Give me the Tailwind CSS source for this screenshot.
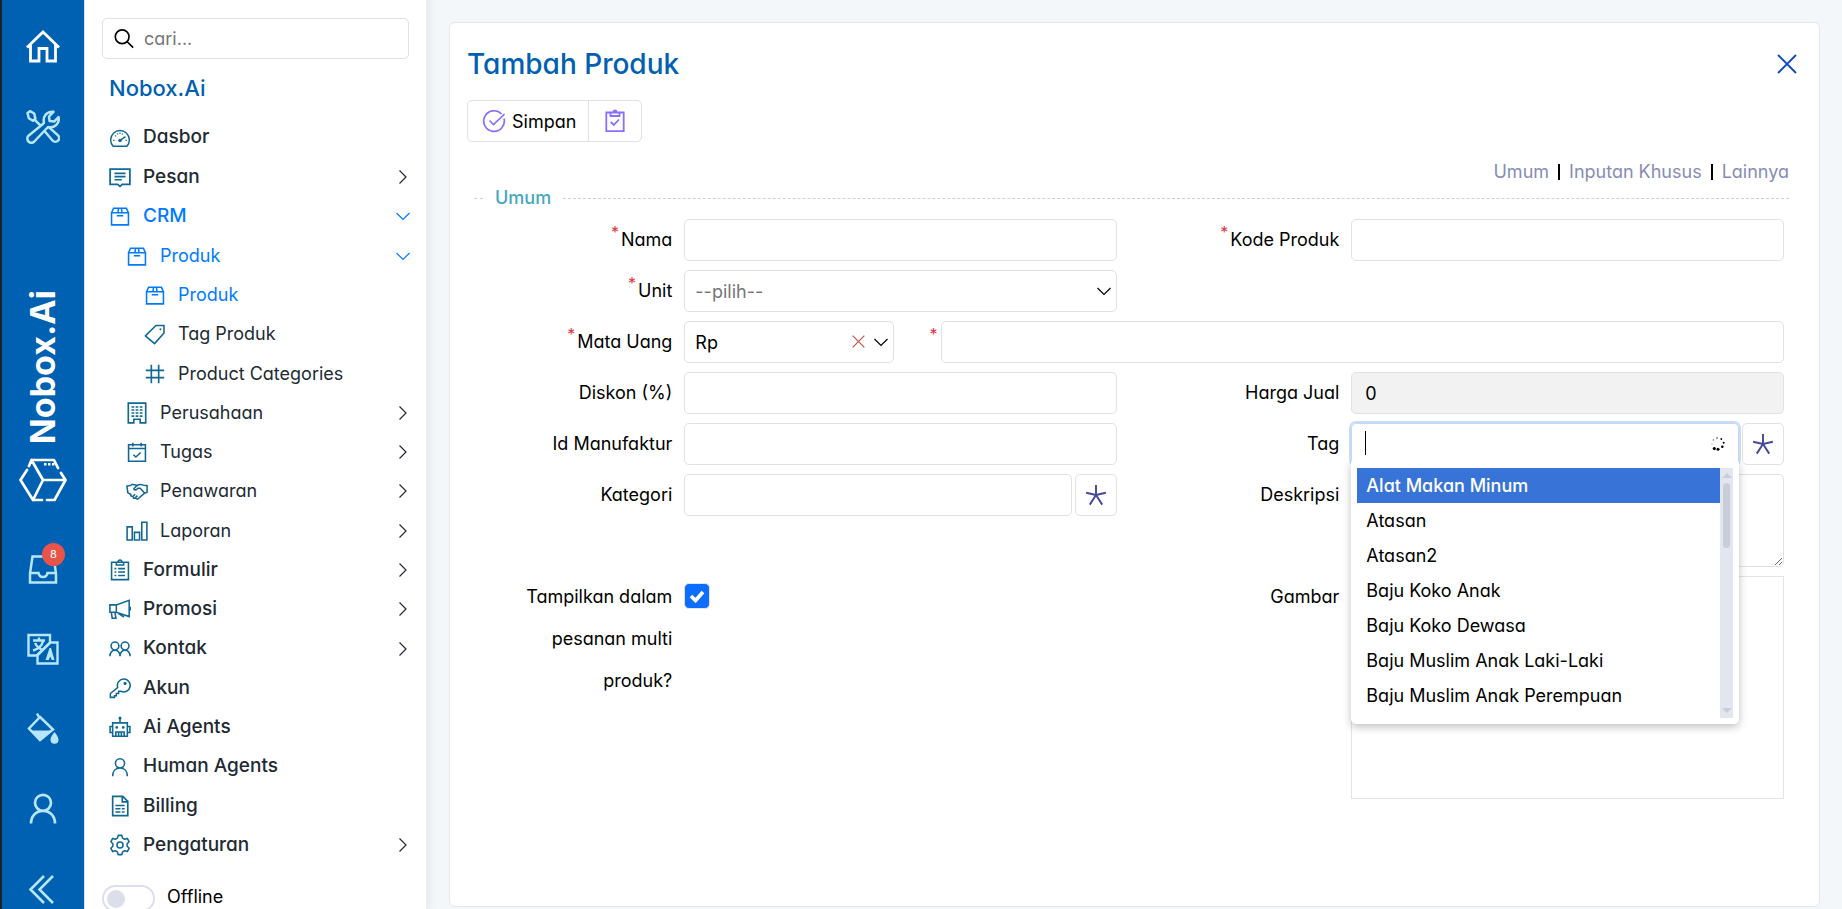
<!DOCTYPE html>
<html lang="id">
<head>
<meta charset="utf-8">
<title>Nobox.Ai - Tambah Produk</title>
<script src="https://cdn.jsdelivr.net/npm/@tailwindcss/browser@4"></script>
</head>
<body class="h-screen overflow-hidden bg-[#f3f7fa] font-['Inter','Liberation_Sans',sans-serif] text-[18px] text-black [font-feature-settings:'cv11']">

<svg class="hidden" aria-hidden="true">
  <symbol id="home" viewBox="0 0 34 34"><path d="M1 17.500 17 2l16 15.500M4.500 15V31h8.500V18.500h8V31h8.500V15" fill="none" stroke="currentColor" stroke-width="2.800"/></symbol>
  <symbol id="tools" viewBox="0 0 34 34"><g fill="none" stroke="currentColor" stroke-width="2.500" stroke-linejoin="round"><path d="M1.500 3 4 1.200l4.200 2.300 1.200 5.200L7 10.800 2.800 8.200z"/><path d="m8.500 9.700 6.500 6.300"/><path d="m16 14.800 2-2C16.500 7 20.500 1 27.500 1.800L23 6.500 23.600 11l4.600.6 4.300-4.600c1.500 6.500-4 11.500-10.500 10L8.300 31.500a4 4 0 0 1-5.800-5.800z"/><path d="m18.500 21 8.200 9.700a3.700 3.700 0 0 0 5.300-5.300L22.800 17"/></g></symbol>
  <symbol id="cube" viewBox="0 0 48 44"><g fill="none" stroke="currentColor" stroke-width="2.700" stroke-linejoin="round" stroke-linecap="round"><path d="M10 8 12.500 2H35l4 8M42 15l4.500 7-11 20H28M23 42H14L1.500 22l6.500-10M12.500 2 24 22h22M24 22 14 42"/></g><path d="M25 5h2.500v2.500H25zm4 0h2.500v2.500H29zm4 0h2.500v2.500H33z" fill="currentColor"/></symbol>
  <symbol id="inbox" viewBox="0 0 34 34"><path d="M6.500 4.500h21l2.500 17v9H4v-9zM4 21h8.500c.5 3 2.500 4 4.500 4s4-1 4.500-4H30" fill="none" stroke="currentColor" stroke-width="2.500"/></symbol>
  <symbol id="translate" viewBox="0 0 34 34"><g fill="none" stroke="currentColor" stroke-width="2.400"><path d="M24 12V3H2.500v20.500H10"/><path d="M24.500 10.500h7V31.500h-20v-8z"/><path d="M24 10.500 10 24M7 8.500h12M13 5.500v3M17 9c-1 5-5 8-10 9.500M9 11c2 4 4 6 8 7"/></g><path d="m19.500 28 4-12h1.500l3.500 12h-2.700l-1.600-3.500-1.500 3.500z" fill="currentColor"/></symbol>
  <symbol id="bucket" viewBox="0 0 34 34"><path d="M11 1.500 13.500 6M14 5 27 17.500 14 28 3 16.500z" fill="none" stroke="currentColor" stroke-width="2.500"/><path d="M5 18.500h21L14 29zM28.500 20c2.500 3.500 4 5.500 4 7.700a4 4 0 0 1-8 0c0-2.200 1.500-4.200 4-7.700" fill="currentColor"/></symbol>
  <symbol id="person" viewBox="0 0 34 34"><path d="M17 18.800a8 8 0 1 0 0-16 8 8 0 0 0 0 16zM5 31.500c0-7.500 5-12.700 12-12.700s12 5.200 12 12.700" fill="none" stroke="currentColor" stroke-width="2.700"/></symbol>
  <symbol id="collapse" viewBox="0 0 34 34"><path d="M18 4 4.500 17.500 18 31M27 4 13.500 17.500 27 31" fill="none" stroke="currentColor" stroke-width="2.600"/></symbol>

  <symbol id="search" viewBox="0 0 24 24"><g fill="none" stroke="currentColor" stroke-width="1.800"><circle cx="10" cy="9.500" r="7.500"/><path d="m15.500 15 6.500 6.500"/></g></symbol>
  <symbol id="dash" viewBox="0 0 24 24"><g fill="none" stroke="currentColor" stroke-width="1.600"><path d="M4.500 21A10.200 10.200 0 1 1 19.500 21z"/><path d="m12 14.500 6-4"/><path d="M4.500 14.500H6M12 6v1.500M18 14.500h1.500M6.500 9.200l1 1M9 7l.6 1.200M15 7l-.6 1.200" stroke-width="1.300"/></g><circle cx="12" cy="14.800" r="1.900" fill="currentColor"/></symbol>
  <symbol id="chat" viewBox="0 0 24 24"><path d="M1.200 3.500h21.600v16.500H14.500L12 22.300 9.500 20H1.200zM6 8h12M6 11.500h12M6 15h8" fill="none" stroke="currentColor" stroke-width="1.900"/></symbol>
  <symbol id="box" viewBox="0 0 24 24"><path d="M2.800 8.500h18.400v13.200H2.800zM2.800 8.500 5 3.500h14l2.200 5M8.500 11.800h7M9.800 8.200l.6-4.500M14.200 8.200l-.6-4.500" fill="none" stroke="currentColor" stroke-width="1.700"/></symbol>
  <symbol id="tag" viewBox="0 0 24 24"><path d="M13 2.800h8.800V11L11.500 22.500 1.500 14z" fill="none" stroke="currentColor" stroke-width="1.700" stroke-linejoin="round"/><circle cx="17.900" cy="6.800" r="1.100" fill="currentColor"/></symbol>
  <symbol id="hash" viewBox="0 0 24 24"><path d="M8 2v20M16 2v20M2 8h20M2 16h20" fill="none" stroke="currentColor" stroke-width="1.800"/></symbol>
  <symbol id="building" viewBox="0 0 24 24"><path d="M2.500 1.200h19v21.600h-6v-4h-7v4h-6z" fill="none" stroke="currentColor" stroke-width="1.800"/><path d="M6 5.500h12M6 8.800h12M6 12.100h12M6 15.400h12" fill="none" stroke="currentColor" stroke-width="1.700" stroke-dasharray="3 1.500"/></symbol>
  <symbol id="calendar" viewBox="0 0 24 24"><path d="M2.800 4h18.400v18H2.800zM2.800 8.200h18.400M7.500 2v4M16.500 2v4m-8.500 9 2.800 2.500 5.200-5" fill="none" stroke="currentColor" stroke-width="1.700"/></symbol>
  <symbol id="shake" viewBox="0 0 24 24"><path d="M1 6.500c3-.5 4 .3 5.500-1.500C9 4.500 10 5.500 12 6c1.500-1 4-1.500 6-.7 2 .9 3 .7 5 .7v7.500l-3 1-7.500 6.500-2-1.500-2 .5-1-2-2-.5-.5-2-3-1.500zM12 6 8.500 9.500c.5 2 3 1.500 4.500-.5h2.500l4.700 5.200M8 17.500l2-2m.5 3.500 2-2" fill="none" stroke="currentColor" stroke-width="1.700" stroke-linejoin="round"/></symbol>
  <symbol id="bars" viewBox="0 0 24 24"><path d="M1.200 7.500h5.600v14.300H1.200zm8 6h5.600v8.300H9.200zm8-11h5.600v19.300h-5.600z" fill="none" stroke="currentColor" stroke-width="1.700"/></symbol>
  <symbol id="form" viewBox="0 0 24 24"><path d="M2.800 3.500h18.400v19H2.800zM8 3.500V6.500h8V3.500M10 3a2 2 0 0 1 4 0M10 10.500h7.500M10 14.200h7.500M10 18h7.500M6 10.500H8M6 14.200H8M6 18H8" fill="none" stroke="currentColor" stroke-width="1.700"/></symbol>
  <symbol id="horn" viewBox="0 0 24 24"><path d="M1 7.500h7L22 2.500v17.800L8 15.500H1zM8 7.500v8M2.500 15.500l1 6.500h4l-1-6.500M10 16.800l6.500 4M23.300 9.500v4" fill="none" stroke="currentColor" stroke-width="1.700"/></symbol>
  <symbol id="people" viewBox="0 0 24 24"><path d="M6.500 13a4.300 4.300 0 1 0 0-8.600 4.300 4.300 0 0 0 0 8.600zm11 0a4.300 4.300 0 1 0 0-8.600 4.300 4.300 0 0 0 0 8.600zM1 20c0-4 2.500-6.800 5.500-6.800s5.500 2.800 5.500 6.800c0-4 2.500-6.800 5.500-6.800s5.500 2.800 5.500 6.800" fill="none" stroke="currentColor" stroke-width="1.700"/></symbol>
  <symbol id="key" viewBox="0 0 24 24"><path d="M9.500 11.500a7 7 0 1 1 3.500 4H10.500V18H8v2.500H6v1.700H1.500v-4.200z" fill="none" stroke="currentColor" stroke-width="1.700"/><circle cx="17.500" cy="7" r="1.700" fill="currentColor"/></symbol>
  <symbol id="robot" viewBox="0 0 24 24"><path d="M4 7.500h16V22H4zM4 11.500H1.200v6.500H4m16-6.500h2.800v6.500H20M12 7.500V3M7.500 21.500v-4h9v4M10.500 17.500v4m3-4v4" fill="none" stroke="currentColor" stroke-width="1.700"/><circle cx="12" cy="2.200" r="1.700" fill="currentColor"/><circle cx="8.500" cy="12.500" r="1.500" fill="currentColor"/><circle cx="15.500" cy="12.500" r="1.500" fill="currentColor"/></symbol>
  <symbol id="user" viewBox="0 0 24 24"><path d="M12 13a5 5 0 1 0 0-10 5 5 0 0 0 0 10zM4 22c0-5.500 3.200-9 8-9s8 3.500 8 9" fill="none" stroke="currentColor" stroke-width="1.700"/></symbol>
  <symbol id="bill" viewBox="0 0 24 24"><path d="M4 1.500h11l5.500 5.500v15.500H4zM14.500 1.500v6h6M7 11.500h10M7 15h5.500m1.500 0h3M7 18.500h5.500m1.500 0h3" fill="none" stroke="currentColor" stroke-width="1.800"/></symbol>
  <symbol id="gear" viewBox="0 0 24 24"><path d="M10 1.500h4l.8 3 2.200 1.200 3-.9 2 3.700-2.200 2.100v2.800l2.200 2.100-2 3.700-3-.9-2.200 1.200-.8 3h-4l-.8-3L7 18.300l-3 .9-2-3.700 2.200-2.100v-2.800L2 8.500l2-3.700 3 .9 2.200-1.200z" fill="none" stroke="currentColor" stroke-width="1.700" stroke-linejoin="round"/><circle cx="12" cy="12" r="3.300" fill="none" stroke="currentColor" stroke-width="1.700"/></symbol>
  <symbol id="right" viewBox="0 0 16 16"><path d="m4.500 1.500 6.500 6.500-6.500 6.500" fill="none" stroke="currentColor" stroke-width="1.200"/></symbol>
  <symbol id="down" viewBox="0 0 16 16"><path d="m1.500 5 6.500 6.500L14.500 5" fill="none" stroke="currentColor" stroke-width="1.200"/></symbol>
  <symbol id="cross" viewBox="0 0 20 20"><path d="m1 1 18 18M19 1 1 19" fill="none" stroke="currentColor" stroke-width="1.800"/></symbol>
  <symbol id="okcircle" viewBox="0 0 24 24"><path d="M22 9.500A10.300 10.300 0 1 1 19.500 5M7.500 11.500l4 4L22.500 5" fill="none" stroke="currentColor" stroke-width="1.700"/></symbol>
  <symbol id="okclip" viewBox="0 0 24 24"><path d="M3.300 3.500h17.400v18.700H3.300zM7.500 3.500v3.500h9V3.500M10.500 3a1.500 1.500 0 0 1 3 0M7.800 13l3 3L16 10.500" fill="none" stroke="currentColor" stroke-width="1.800"/></symbol>
  <symbol id="star" viewBox="0 0 24 24"><path d="M12 1.200V12M12 12 1.200 9.500M12 12l10.800-2.500M12 12l-6.800 10.500M12 12l6.800 10.500" fill="none" stroke="currentColor" stroke-width="2.100"/></symbol>
</svg>

<div class="flex h-full">
  <!-- Icon rail -->
  <div class="z-10 flex w-[84px] shrink-0 flex-col items-center overflow-hidden border-l-2 border-[#1c2427] bg-[#0060b1] pt-[30px] pb-[3px] text-[#b5e6fc]">
    <a href="#" aria-label="Beranda" class="mb-[46px] text-white"><svg class="size-[34px]"><use href="#home"/></svg></a>
    <a href="#" aria-label="Alat"><svg class="size-[34px]"><use href="#tools"/></svg></a>
    <div class="mt-auto mb-[50px] flex flex-col items-center gap-[14px] text-white">
      <span class="rotate-180 text-[34px] leading-[38px] font-bold [writing-mode:vertical-rl]">Nobox.Ai</span>
      <svg class="h-[44px] w-[48px]"><use href="#cube"/></svg>
    </div>
    <div class="flex flex-col gap-[46px]">
      <a href="#" aria-label="Kotak masuk" class="relative"><svg class="size-[34px]"><use href="#inbox"/></svg><span class="absolute -top-[9px] left-4 flex size-[23px] items-center justify-center rounded-full bg-[#e8544a] text-[11px] text-white">8</span></a>
      <a href="#" aria-label="Bahasa"><svg class="size-[34px]"><use href="#translate"/></svg></a>
      <a href="#" aria-label="Tema"><svg class="size-[34px]"><use href="#bucket"/></svg></a>
      <a href="#" aria-label="Profil"><svg class="size-[34px]"><use href="#person"/></svg></a>
      <button aria-label="Ciutkan"><svg class="size-[34px]"><use href="#collapse"/></svg></button>
    </div>
  </div>

  <!-- Sidebar -->
  <aside class="flex w-[342px] shrink-0 flex-col border-l border-[#e0e4e8] bg-white pt-[18px] shadow-[0_0_8px_4px_#e6eaf0]">
    <label class="mx-[17px] flex h-[41px] items-center gap-[9px] rounded-[5px] border border-[#e1e1e1] px-[10px]">
      <svg class="size-[22px] shrink-0"><use href="#search"/></svg>
      <input type="search" aria-label="Cari" placeholder="cari..." class="w-full outline-none placeholder:text-[#757575]">
    </label>
    <h2 class="flex h-[59px] items-center pl-6 text-[22px] font-medium text-[#0060b1]">Nobox.Ai</h2>
    <nav class="flex min-h-0 flex-1 flex-col pr-[15px] pl-6 text-[#212a33] [&>a]:flex [&>a]:flex-1 [&>a]:items-center">
      <a href="#" class="gap-3 text-[19px] font-medium"><svg class="size-[22px] text-[#106893]"><use href="#dash"/></svg><span class="flex-1">Dasbor</span></a>
      <a href="#" class="gap-3 text-[19px] font-medium"><svg class="size-[22px] text-[#106893]"><use href="#chat"/></svg><span class="flex-1">Pesan</span><svg class="size-4"><use href="#right"/></svg></a>
      <a href="#" class="gap-3 text-[19px] font-medium text-[#007bff]"><svg class="size-[22px]"><use href="#box"/></svg><span class="flex-1">CRM</span><svg class="size-4"><use href="#down"/></svg></a>
      <a href="#" class="gap-3 pl-[17px] text-lg text-[#007bff]"><svg class="size-[22px]"><use href="#box"/></svg><span class="flex-1">Produk</span><svg class="size-4"><use href="#down"/></svg></a>
      <a href="#" class="gap-3 pl-[35px] text-lg text-[#007bff]"><svg class="size-[22px]"><use href="#box"/></svg><span class="flex-1">Produk</span></a>
      <a href="#" class="gap-3 pl-[35px] text-lg"><svg class="size-[22px] text-[#106893]"><use href="#tag"/></svg><span class="flex-1">Tag Produk</span></a>
      <a href="#" class="gap-3 pl-[35px] text-lg"><svg class="size-[22px] text-[#106893]"><use href="#hash"/></svg><span class="flex-1">Product Categories</span></a>
      <a href="#" class="gap-3 pl-[17px] text-lg"><svg class="size-[22px] text-[#106893]"><use href="#building"/></svg><span class="flex-1">Perusahaan</span><svg class="size-4"><use href="#right"/></svg></a>
      <a href="#" class="gap-3 pl-[17px] text-lg"><svg class="size-[22px] text-[#106893]"><use href="#calendar"/></svg><span class="flex-1">Tugas</span><svg class="size-4"><use href="#right"/></svg></a>
      <a href="#" class="gap-3 pl-[17px] text-lg"><svg class="size-[22px] text-[#106893]"><use href="#shake"/></svg><span class="flex-1">Penawaran</span><svg class="size-4"><use href="#right"/></svg></a>
      <a href="#" class="gap-3 pl-[17px] text-lg"><svg class="size-[22px] text-[#106893]"><use href="#bars"/></svg><span class="flex-1">Laporan</span><svg class="size-4"><use href="#right"/></svg></a>
      <a href="#" class="gap-3 text-[19px] font-medium"><svg class="size-[22px] text-[#106893]"><use href="#form"/></svg><span class="flex-1">Formulir</span><svg class="size-4"><use href="#right"/></svg></a>
      <a href="#" class="gap-3 text-[19px] font-medium"><svg class="size-[22px] text-[#106893]"><use href="#horn"/></svg><span class="flex-1">Promosi</span><svg class="size-4"><use href="#right"/></svg></a>
      <a href="#" class="gap-3 text-[19px] font-medium"><svg class="size-[22px] text-[#106893]"><use href="#people"/></svg><span class="flex-1">Kontak</span><svg class="size-4"><use href="#right"/></svg></a>
      <a href="#" class="gap-3 text-[19px] font-medium"><svg class="size-[22px] text-[#106893]"><use href="#key"/></svg><span class="flex-1">Akun</span></a>
      <a href="#" class="gap-3 text-[19px] font-medium"><svg class="size-[22px] text-[#106893]"><use href="#robot"/></svg><span class="flex-1">Ai Agents</span></a>
      <a href="#" class="gap-3 text-[19px] font-medium"><svg class="size-[22px] text-[#106893]"><use href="#user"/></svg><span class="flex-1">Human Agents</span></a>
      <a href="#" class="gap-3 text-[19px] font-medium"><svg class="size-[22px] text-[#106893]"><use href="#bill"/></svg><span class="flex-1">Billing</span></a>
      <a href="#" class="gap-3 text-[19px] font-medium"><svg class="size-[22px] text-[#106893]"><use href="#gear"/></svg><span class="flex-1">Pengaturan</span><svg class="size-4"><use href="#right"/></svg></a>
    </nav>
    <label class="flex h-11 shrink-0 items-start gap-3 overflow-hidden pt-5 pl-[17px]">
      <input type="checkbox" role="switch" class="h-[27px] w-[53px] shrink-0 appearance-none rounded-full border-2 border-[#dcdeeb] before:mt-[3px] before:ml-[3px] before:block before:size-[18px] before:rounded-full before:bg-[#dcdeeb]">
      <span class="leading-6">Offline</span>
    </label>
  </aside>

  <!-- Product form -->
  <main class="min-w-0 flex-1 pt-[22px] pr-[22px] pb-[2px] pl-[23px]">
    <section class="h-full rounded-md border border-[#e4e8eb] bg-white">
      <header class="flex items-center justify-between pt-[23px] pr-[22px] pl-[17px]">
        <h1 class="text-[28px] leading-9 font-medium text-[#0060b1]">Tambah Produk</h1>
        <button aria-label="Tutup" class="text-[#0a46c8]"><svg class="size-5"><use href="#cross"/></svg></button>
      </header>
      <div class="mt-[18px] ml-[17px] flex h-[42px] w-fit rounded-[5px] border border-[#e1e1e1]">
        <button class="flex items-center gap-[6px] border-r border-[#e1e1e1] pr-3 pl-[14px]"><svg class="size-6 text-[#8670ff]"><use href="#okcircle"/></svg>Simpan</button>
        <button aria-label="Simpan dan tutup" class="px-[14px]"><svg class="size-6 text-[#8670ff]"><use href="#okclip"/></svg></button>
      </div>
      <div class="mt-[18px] flex items-center justify-end gap-[9px] pr-[30px] leading-6 text-[#868db5]">
        <a href="#umum">Umum</a><span class="h-4 w-[2px] bg-black"></span><a href="#khusus">Inputan Khusus</a><span class="h-4 w-[2px] bg-black"></span><a href="#lainnya">Lainnya</a>
      </div>
      <div id="umum" class="mt-[2px] flex items-center gap-3 pr-[30px] pl-6">
        <span class="w-[9px] border-t border-dashed border-[#ccd1d1]"></span>
        <h2 class="leading-6 font-medium text-[#45a8bf]">Umum</h2>
        <span class="flex-1 border-t border-dashed border-[#ccd1d1]"></span>
      </div>

      <form class="mt-[9px] grid grid-cols-2 gap-y-[9px] pr-[35px]">
        <div class="flex gap-3">
          <label for="nama" class="w-1/3 text-right leading-[42px]"><sup class="mr-[2px] text-base leading-none text-[#dc3545]">*</sup>Nama</label>
          <input id="nama" class="h-[42px] min-w-0 flex-1 rounded-[5px] border border-[#e1e1e1] px-3">
        </div>
        <div class="flex gap-3">
          <label for="kode" class="w-1/3 text-right leading-[42px]"><sup class="mr-[2px] text-base leading-none text-[#dc3545]">*</sup>Kode Produk</label>
          <input id="kode" class="h-[42px] min-w-0 flex-1 rounded-[5px] border border-[#e1e1e1] px-3">
        </div>

        <div class="flex gap-3">
          <label for="unit" class="w-1/3 text-right leading-[42px]"><sup class="mr-[2px] text-base leading-none text-[#dc3545]">*</sup>Unit</label>
          <div class="relative flex-1">
            <select id="unit" class="h-[42px] w-full appearance-none rounded-[5px] border border-[#e1e1e1] px-[10px] text-[#757575]"><option>--pilih--</option></select>
            <svg class="pointer-events-none absolute top-[13px] right-[5px] size-4"><use href="#down"/></svg>
          </div>
        </div>

        <div class="col-span-2 flex">
          <label for="uang" class="mr-3 w-1/6 text-right leading-[42px]"><sup class="mr-[2px] text-base leading-none text-[#dc3545]">*</sup>Mata Uang</label>
          <div class="relative flex-1">
            <select id="uang" class="h-[42px] w-full appearance-none rounded-[5px] border border-[#e1e1e1] px-[10px]"><option>Rp</option></select>
            <button type="button" aria-label="Hapus pilihan" class="absolute top-[14px] right-[29px] text-[#c0504d]"><svg class="size-[13px]"><use href="#cross"/></svg></button>
            <svg class="pointer-events-none absolute top-[13px] right-[5px] size-4"><use href="#down"/></svg>
          </div>
          <label for="harga" class="w-[47px] pr-[2px] text-right leading-[42px]"><sup class="mr-[2px] text-base leading-none text-[#dc3545]">*</sup></label>
          <input id="harga" aria-label="Harga" class="h-[42px] min-w-0 flex-[4] rounded-[5px] border border-[#e1e1e1]">
        </div>

        <div class="flex gap-3">
          <label for="diskon" class="w-1/3 text-right leading-[42px]">Diskon (%)</label>
          <input id="diskon" class="h-[42px] min-w-0 flex-1 rounded-[5px] border border-[#e1e1e1] px-3">
        </div>
        <div class="flex gap-3">
          <label for="jual" class="w-1/3 text-right leading-[42px]">Harga Jual</label>
          <input id="jual" value="0" readonly class="h-[42px] min-w-0 flex-1 rounded-[5px] border border-[#e1e1e1] bg-[#f2f2f2] px-[13px]">
        </div>

        <div class="flex gap-3">
          <label for="manufaktur" class="w-1/3 text-right leading-[42px]">Id Manufaktur</label>
          <input id="manufaktur" class="h-[42px] min-w-0 flex-1 rounded-[5px] border border-[#e1e1e1] px-3">
        </div>
        <div class="flex gap-3">
          <label for="tag-input" class="w-1/3 text-right leading-[42px]">Tag</label>
          <div class="flex flex-1 gap-[3px]">
            <div class="relative flex-1">
              <input id="tag-input" class="h-[42px] w-full rounded-[5px] border border-[#c3d8f5] px-3 ring-2 ring-[#c9dcf7]">
              <span class="absolute top-2 left-[14px] h-6 w-px bg-black"></span>
              <svg class="absolute top-[14px] right-[14px] size-[14px]" viewBox="0 0 14 14"><circle cx="7" cy="12.300" r="1.500"/><circle cx="3.300" cy="11.600" r="1.600"/><circle cx="11.300" cy="9.700" r="1.300"/><circle cx="12.700" cy="5.800" r="1"/><circle cx="10.300" cy="2" r=".9"/><circle cx="6" cy="1" r=".8" opacity=".8"/><circle cx="2.300" cy="3" r=".7" opacity=".6"/><circle cx="1" cy="7" r=".6" opacity=".5"/></svg>
              <div class="absolute top-[39px] right-0 left-0 z-10 flex rounded-b-[5px] bg-white p-[6px] shadow-[0_3px_8px_rgba(0,0,0,0.25)] [clip-path:inset(0_-12px_-16px_-12px)]">
                <ul role="listbox" aria-label="Tag" class="h-[250px] flex-1 overflow-hidden leading-[35px] [&>li]:pl-[9px]">
                  <li role="option" aria-selected="true" class="bg-[#3874d8] font-medium text-white">Alat Makan Minum</li>
                  <li role="option">Atasan</li>
                  <li role="option">Atasan2</li>
                  <li role="option">Baju Koko Anak</li>
                  <li role="option">Baju Koko Dewasa</li>
                  <li role="option">Baju Muslim Anak Laki-Laki</li>
                  <li role="option">Baju Muslim Anak Perempuan</li>
                </ul>
                <div class="flex w-[13px] flex-col items-center bg-[#e2e6ee] py-[5px]">
                  <span class="border-x-[5px] border-b-[5px] border-x-transparent border-b-[#c9cdd9]"></span>
                  <span class="mt-[5px] h-[65px] w-[7px] rounded-full bg-[#c9cdd9]"></span>
                  <span class="mt-auto border-x-[5px] border-t-[5px] border-x-transparent border-t-[#c9cdd9]"></span>
                </div>
              </div>
            </div>
            <button type="button" aria-label="Tambah tag" class="flex size-[42px] items-center justify-center rounded-[5px] border border-[#e1e1e1] text-[#464a92]"><svg class="size-[22px]"><use href="#star"/></svg></button>
          </div>
        </div>

        <div class="flex gap-3">
          <label for="kategori" class="w-1/3 text-right leading-[42px]">Kategori</label>
          <div class="flex flex-1 gap-[3px]">
            <input id="kategori" class="h-[42px] min-w-0 flex-1 rounded-[5px] border border-[#e1e1e1] px-3">
            <button type="button" aria-label="Tambah kategori" class="flex size-[42px] items-center justify-center rounded-[5px] border border-[#e1e1e1] text-[#464a92]"><svg class="size-[22px]"><use href="#star"/></svg></button>
          </div>
        </div>
        <div class="flex gap-3">
          <label for="deskripsi" class="w-1/3 text-right leading-[42px]">Deskripsi</label>
          <textarea id="deskripsi" class="h-[93px] min-w-0 flex-1 rounded-[5px] border border-[#e1e1e1] px-3"></textarea>
        </div>

        <div class="flex gap-3">
          <label for="multi" class="w-1/3 pl-12 text-right leading-[42px]">Tampilkan dalam pesanan multi produk?</label>
          <span class="relative mt-[7px] size-[26px]">
            <input id="multi" type="checkbox" checked class="block size-[26px] appearance-none rounded-[5px] border border-[#dfe5ee] checked:bg-[#0d6efd]">
            <svg viewBox="0 0 26 26" class="pointer-events-none absolute inset-0 size-[26px]"><path d="m7 13 4.500 4.500L19 9" fill="none" stroke="#fff" stroke-width="3.600"/></svg>
          </span>
        </div>
        <div class="flex gap-3">
          <span class="w-1/3 text-right leading-[42px]">Gambar</span>
          <div class="h-[223px] flex-1 border border-[#e4e4e4]"></div>
        </div>
      </form>
    </section>
  </main>
</div>
</body>
</html>
